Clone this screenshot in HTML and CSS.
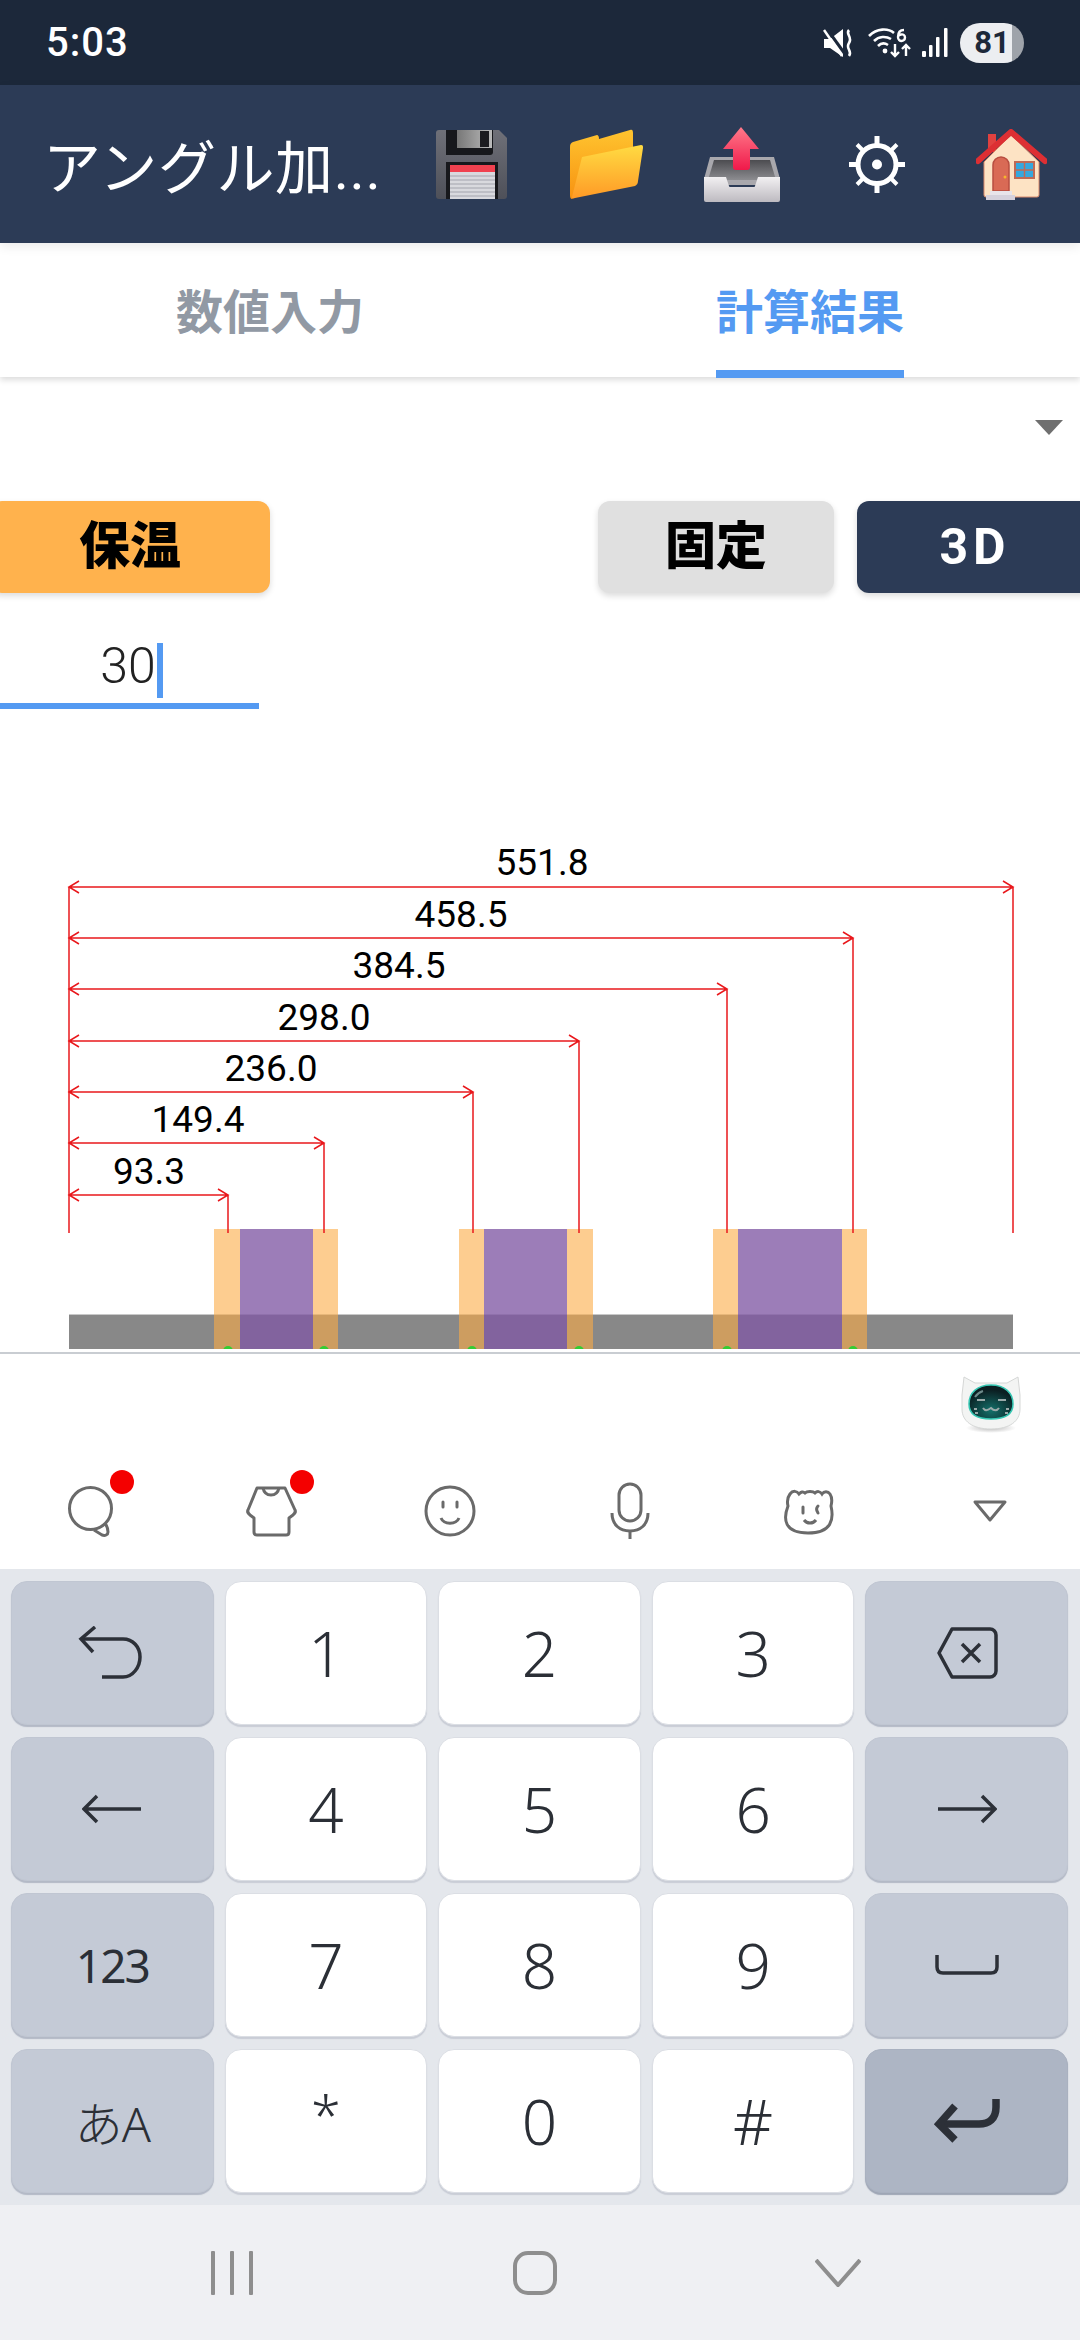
FILE: index.html
```html
<!DOCTYPE html>
<html lang="ja">
<head>
    <meta charset="UTF-8">
    <meta name="viewport" content="width=device-width, initial-scale=1.0">
    <title>アングル加工</title>
    <link rel="stylesheet" href="styles.css">
</head>
<body>
<div id="phone">
    <!-- ステータスバー -->
    <div id="status">
        <span class="time">5:03</span>
        <div class="status-icons">
            <svg width="30" height="28" viewBox="0 0 30 28"><path d="M1 10h6L20 0v28L7 19H1z" fill="#fff"/><path d="M4 0l18 25" stroke="#1c283a" stroke-width="3"/><path d="M1 1l18 26" stroke="#fff" stroke-width="2.500"/><path d="M26 1c-4 4 4 7 0 13s4 8 0 13" fill="none" stroke="#fff" stroke-width="2.600"/></svg>
            <svg width="44" height="31" viewBox="0 0 44 31"><g fill="none" stroke="#fff" stroke-width="2.600"><path d="M1 9c8-8 19-8 25-3"/><path d="M6 14c5-5 12-5 17-2"/><path d="M10 19c3-3 7-3 10-1"/></g><circle cx="17" cy="24" r="2.400" fill="#fff"/><g fill="none" stroke="#fff" stroke-width="2.400"><path d="M27 17v12M23 25l4 4 4-4"/><path d="M38 29V18M34 22l4-4 4 4"/><path d="M36 3c-4 0-6 3-6 7 0 3 2 4 3.500 4s3.500-1 3.500-3.500S35 7 33 7.500 30 9 30 10"/></g></svg>
            <svg width="26" height="29" viewBox="0 0 26 29" fill="#fff"><rect x="0" y="23" width="4" height="6" rx="1"/><rect x="7" y="17" width="3.500" height="12" rx="1"/><rect x="14" y="9" width="3.500" height="20" rx="1"/><rect x="22" y="0" width="3.500" height="29" rx="1"/></svg>
            <div class="battery"><span>81</span></div>
        </div>
    </div>

    <!-- ヘッダー -->
    <div id="header">
        <div class="title">アングル加...</div>
        <div class="tools">
            <div class="tool">
            <svg width="71" height="69" viewBox="0 0 71 69">
                <defs>
                    <linearGradient id="fl" x1="0" y1="0" x2="0" y2="1"><stop offset="0" stop-color="#6f7078"/><stop offset="1" stop-color="#4e5059"/></linearGradient>
                    <linearGradient id="sh" x1="0" y1="0" x2="1" y2="0"><stop offset="0" stop-color="#777"/><stop offset="1" stop-color="#bbb"/></linearGradient>
                </defs>
                <path d="M3 0h60l8 8v58a3 3 0 0 1-3 3H3a3 3 0 0 1-3-3V3a3 3 0 0 1 3-3z" fill="url(#fl)"/>
                <path d="M10 0h47v22a3 3 0 0 1-3 3H10z" fill="#17181c"/>
                <rect x="21" y="0" width="35" height="18" fill="url(#sh)"/>
                <rect x="44" y="1" width="9" height="16" fill="#1c1c20"/>
                <rect x="10" y="32" width="52" height="37" fill="#17181c"/>
                <rect x="14" y="35" width="45" height="7" fill="#f0414f"/>
                <rect x="14" y="42" width="45" height="27" fill="#d9d9de"/>
                <g stroke="#a3a4ad" stroke-width="1"><path d="M14 46h45M14 50h45M14 54h45M14 58h45M14 62h45M14 66h45"/></g>
            </svg>
            </div>
            <div class="tool">
            <svg width="73" height="70" viewBox="0 0 73 70">
                <defs>
                    <linearGradient id="fa" x1="0" y1="0" x2="0" y2="1"><stop offset="0" stop-color="#ffc42f"/><stop offset="1" stop-color="#f79211"/></linearGradient>
                    <linearGradient id="fb" x1="0" y1="0" x2="0" y2="1"><stop offset="0" stop-color="#ffdb42"/><stop offset="1" stop-color="#ff9a26"/></linearGradient>
                </defs>
                <path d="M0 18c0-3 1-4 3-5l24-7c1 0 2 1 2 4l31-9c2-1 3 0 3 3v36L5 68 2 70C1 70 0 69 0 66z" fill="url(#fa)"/>
                <path d="M12 28l59-12c2 0 2 1 2 3l-5 33c0 2-1 4-3 5L5 69c-2 1-3 0-3-1z" fill="url(#fb)"/>
            </svg>
            </div>
            <div class="tool">
            <svg width="76" height="75" viewBox="0 0 76 75">
                <defs>
                    <linearGradient id="ar" x1="0" y1="0" x2="0" y2="1"><stop offset="0" stop-color="#ff7a8a"/><stop offset="1" stop-color="#f0194a"/></linearGradient>
                    <linearGradient id="bx" x1="0" y1="0" x2="0" y2="1"><stop offset="0" stop-color="#f2f0f2"/><stop offset="1" stop-color="#bdbac0"/></linearGradient>
                    <linearGradient id="in" x1="0" y1="0" x2="0" y2="1"><stop offset="0" stop-color="#4c4c50"/><stop offset="1" stop-color="#8c8c90"/></linearGradient>
                </defs>
                <path d="M6 30h64l6 22v6H0v-6z" fill="#a9a8ad"/>
                <path d="M10 33h56l6 20H4z" fill="url(#in)"/>
                <path d="M0 50h22l3 9c0 1 1 1 2 1h22c1 0 2 0 2-1l3-9h22v23a2 2 0 0 1-2 2H2a2 2 0 0 1-2-2z" fill="url(#bx)"/>
                <path d="M37 0l18 22H46v18a3 3 0 0 1-3 3H32a3 3 0 0 1-3-3V22H19z" fill="url(#ar)"/>
            </svg>
            </div>
            <div class="tool">
            <svg width="56" height="57" viewBox="0 0 56 57">
                <g stroke="#fff" fill="none">
                    <circle cx="28" cy="28.500" r="19" stroke-width="5"/>
                    <path d="M28 0v9M28 48v9M0 28.500h9M47 28.500h9" stroke-width="5"/>
                    <path d="M8 8.500l6 6M42 42.500l6 6M48 8.500l-6 6M14 42.500l-6 6" stroke-width="4"/>
                </g>
                <circle cx="28" cy="28.500" r="5" fill="#fff"/>
            </svg>
            </div>
            <div class="tool">
            <svg width="71" height="71" viewBox="0 0 71 71">
                <rect x="12" y="5" width="8" height="18" fill="#e0413f"/>
                <path d="M8 33L35 6l28 27v33a2 2 0 0 1-2 2H10a2 2 0 0 1-2-2z" fill="#fde3c4" stroke="#d98a6c" stroke-width="1"/>
                <path d="M2 32L35 3l34 29" fill="none" stroke="#dd2f33" stroke-width="6" stroke-linecap="round" stroke-linejoin="round"/>
                <path d="M17 62V36a8 8 0 0 1 16 0v26z" fill="#d96a55" stroke="#b84d40" stroke-width="1.500"/>
                <circle cx="29" cy="48" r="1.500" fill="#f7b52c"/>
                <rect x="39" y="33" width="19" height="16" fill="#35a8de" stroke="#c06a55" stroke-width="2"/>
                <path d="M48.500 33v16M39 41h19" stroke="#c06a55" stroke-width="1.500"/>
                <rect x="14" y="62" width="22" height="4" fill="#e8e4ea"/>
                <rect x="10" y="66" width="29" height="5" fill="#d5d1dc"/>
            </svg>
            </div>
        </div>
    </div>

    <!-- タブ -->
    <div id="tabs">
        <div class="tab">数値入力</div>
        <div class="tab active"><span>計算結果</span></div>
    </div>

    <!-- メイン -->
    <div id="main">
        <div class="select-row"><span class="select-arrow"></span></div>
        <div class="btn-row">
            <div class="btn btn-orange">保温</div>
            <div class="btn btn-gray">固定</div>
            <div class="btn btn-navy">3D</div>
        </div>
        <div class="input-box"><span class="value">30</span><span class="caret"></span></div>

        <!-- 図 -->
        <svg class="diagram" width="1080" height="532" viewBox="0 820 1080 532">
            <rect x="69" y="1314" width="944" height="35" fill="#888"/>
            <rect x="69" y="1314" width="944" height="1" fill="#c8c8c8"/>
            <g fill="rgba(252,172,70,.6)">
                <rect x="214" y="1229" width="26" height="120"/><rect x="313" y="1229" width="25" height="120"/>
                <rect x="459" y="1229" width="25" height="120"/><rect x="567" y="1229" width="26" height="120"/>
                <rect x="713" y="1229" width="25" height="120"/><rect x="842" y="1229" width="25" height="120"/>
            </g>
            <g fill="rgba(128,88,164,.78)">
                <rect x="240" y="1229" width="73" height="120"/>
                <rect x="484" y="1229" width="83" height="120"/>
                <rect x="738" y="1229" width="104" height="120"/>
            </g>
            <g fill="#3c3">
                <circle cx="228" cy="1351" r="5"/><circle cx="324" cy="1351" r="5"/>
                <circle cx="472" cy="1351" r="5"/><circle cx="579" cy="1351" r="5"/>
                <circle cx="727" cy="1351" r="5"/><circle cx="853" cy="1351" r="5"/>
            </g>
            <rect x="0" y="1349" width="1080" height="3" fill="#fff"/>
            <g class="dim" fill="none" stroke="#e9181c" stroke-width="1.500">
                <path d="M69 887V1233"/>
                <path d="M69 887H1013M79 881L69 887L79 893M1003 881L1013 887L1003 893M1013 887V1233"/>
                <path d="M69 938H853M79 932L69 938L79 944M843 932L853 938L843 944M853 938V1233"/>
                <path d="M69 989H727M79 983L69 989L79 995M717 983L727 989L717 995M727 989V1233"/>
                <path d="M69 1041H579M79 1035L69 1041L79 1047M569 1035L579 1041L569 1047M579 1041V1233"/>
                <path d="M69 1092H473M79 1086L69 1092L79 1098M463 1086L473 1092L463 1098M473 1092V1233"/>
                <path d="M69 1143H324M79 1137L69 1143L79 1149M314 1137L324 1143L314 1149M324 1143V1233"/>
                <path d="M69 1195H228M79 1189L69 1195L79 1201M218 1189L228 1195L218 1201M228 1195V1233"/>
            </g>
            <g class="dim-label" text-anchor="middle">
                <text x="542" y="875">551.8</text>
                <text x="461" y="927">458.5</text>
                <text x="399" y="978">384.5</text>
                <text x="324" y="1030">298.0</text>
                <text x="271" y="1081">236.0</text>
                <text x="198" y="1132">149.4</text>
                <text x="149" y="1184">93.3</text>
            </g>
        </svg>
    </div>

    <!-- キーボードのツールバー -->
    <div id="kb-bar">
        <div class="robot-row">
            <svg width="62" height="60" viewBox="0 0 62 60">
                <defs>
                    <radialGradient id="face" cx=".5" cy=".75" r=".6"><stop offset="0" stop-color="#13706a"/><stop offset="1" stop-color="#0b1f22"/></radialGradient>
                    <radialGradient id="sd" cx=".5" cy=".5" r=".5"><stop offset="0" stop-color="#bbb"/><stop offset="1" stop-color="#fff"/></radialGradient>
                </defs>
                <ellipse cx="31" cy="55" rx="25" ry="5" fill="url(#sd)"/>
                <path d="M4 4l11 6h32l11-6 2 18v14c0 12-10 20-29 20S2 48 2 36V22z" fill="#f3f4f3" stroke="#d5d7d6"/>
                <path d="M31 12c14 0 22 8 22 19 0 10-8 15-22 15S9 41 9 31c0-11 8-19 22-19z" fill="url(#face)" stroke="#35c7b3" stroke-width="1.500"/>
                <path d="M15 24c2-3 5-5 8-6" stroke="#6d8b8b" stroke-width="2" fill="none"/>
                <g stroke="#9aa9a9" stroke-width="2" fill="none"><path d="M17 27h8M38 27h8"/><path d="M23 35c2 3 4 3 8 0 3 3 6 3 8 0"/><path d="M14 36h3M46 36h3M15 40h3M45 40h3"/></g>
            </svg>
        </div>
        <div class="bar-icons">
            <div class="bar-icon">
                <svg width="64" height="60" viewBox="0 0 64 60" fill="none" stroke="#6a6a6a" stroke-width="3"><circle cx="32.500" cy="29.500" r="21"/><path d="M47 44c2 3 3 6 3 9 0 3-3 4-6 3l-8-5"/></svg>
                <span class="red-dot"></span>
            </div>
            <div class="bar-icon">
                <svg width="64" height="60" viewBox="0 0 64 60" fill="none" stroke="#6a6a6a" stroke-width="3" stroke-linejoin="round"><path d="M19 9h28l10 22c1 2 0 3-2 5l-4 3v14c0 2-1 3-3 3H19c-2 0-3-1-3-3V39l-4-3c-2-2-3-3-2-5z"/><path d="M25 9c1 5 4 7 8 7s7-2 8-7"/></svg>
                <span class="red-dot"></span>
            </div>
            <div class="bar-icon">
                <svg width="64" height="60" viewBox="0 0 64 60" fill="none" stroke="#6a6a6a" stroke-width="3"><circle cx="32" cy="32" r="24"/><path d="M23 39c3 7 15 7 18 0"/><path d="M25 23v5M39 23v5" stroke-linecap="round"/></svg>
            </div>
            <div class="bar-icon">
                <svg width="64" height="60" viewBox="0 0 64 60" fill="none" stroke="#6a6a6a" stroke-width="3"><rect x="21" y="5" width="22" height="37" rx="11"/><path d="M14 34c0 12 8 18 18 18s18-6 18-18"/><path d="M32 52v8"/></svg>
            </div>
            <div class="bar-icon">
                <svg width="64" height="60" viewBox="0 0 64 60" fill="none" stroke="#6a6a6a" stroke-width="3"><path d="M12 15c3-4 7-3 9 0 2-2 4-3 6-1 2-2 8-2 10 0 2-2 5-2 7 1 2-3 6-3 8 0 2 3 2 8 1 12 3 13 1 27-23 27S5 40 10 27c-1-4-1-8 2-12z"/><path d="M25 28v6M40 27c-2 2-2 4 0 7" stroke-linecap="round"/><path d="M26 41c3 4 9 4 12 0"/></svg>
            </div>
            <div class="bar-icon">
                <svg width="64" height="60" viewBox="0 0 64 60" fill="none" stroke="#6a6a6a" stroke-width="3" stroke-linejoin="round"><path d="M17 23h30L32 41z"/></svg>
            </div>
        </div>
    </div>

    <!-- キーボード -->
    <div id="keyboard">
        <div class="key side">
            <svg width="68" height="54" viewBox="0 0 68 54" fill="none" stroke="#2c3038" stroke-width="3.500"><path d="M3 13h42c10 0 17 8 17 18s-7 20-17 20H24"/><path d="M17 1L3 13l12 13"/></svg>
        </div>
        <div class="key">1</div>
        <div class="key">2</div>
        <div class="key">3</div>
        <div class="key side">
            <svg width="62" height="52" viewBox="0 0 62 52" fill="none" stroke="#2c3038" stroke-width="3.500" stroke-linejoin="round"><path d="M16 2h38a6 6 0 0 1 6 6v36a6 6 0 0 1-6 6H16L3 26z"/><path d="M26 17l18 18M44 17L26 35"/></svg>
        </div>
        <div class="key side">
            <svg width="60" height="30" viewBox="0 0 60 30" fill="none" stroke="#2c3038" stroke-width="3.500"><path d="M2 15h57M15 2L2 15l13 13"/></svg>
        </div>
        <div class="key">4</div>
        <div class="key">5</div>
        <div class="key">6</div>
        <div class="key side">
            <svg width="60" height="30" viewBox="0 0 60 30" fill="none" stroke="#2c3038" stroke-width="3.500"><path d="M1 15h57M45 2l13 13-13 13"/></svg>
        </div>
        <div class="key side small">123</div>
        <div class="key">7</div>
        <div class="key">8</div>
        <div class="key">9</div>
        <div class="key side">
            <svg width="64" height="20" viewBox="0 0 64 20" fill="none" stroke="#2c3038" stroke-width="3.500"><path d="M2 0v12c0 4 2 6 6 6h48c4 0 6-2 6-6V0"/></svg>
        </div>
        <div class="key side small kana">あA</div>
        <div class="key star">*</div>
        <div class="key">0</div>
        <div class="key">#</div>
        <div class="key enter">
            <svg width="68" height="44" viewBox="0 0 68 44" fill="none" stroke="#2c3038" stroke-width="7.500" stroke-linejoin="miter"><path d="M63 0v8c0 12-7 17-17 17H8"/><path d="M22 7L6 25l16 16"/></svg>
        </div>
    </div>

    <!-- ナビゲーションバー -->
    <div id="nav">
        <svg class="nav-recent" width="42" height="44" viewBox="0 0 42 44" fill="#8e8e8e"><rect x="0" width="4" height="44" rx="1"/><rect x="19" width="4" height="44" rx="1"/><rect x="38" width="4" height="44" rx="1"/></svg>
        <span class="nav-home"></span>
        <svg class="nav-back" width="46" height="28" viewBox="0 0 46 28" fill="none" stroke="#8e8e8e" stroke-width="4"><path d="M1 1l22 25L45 1"/></svg>
    </div>
</div>
</body>
</html>
```
FILE: styles.css
```css
*{
    margin: 0;
    padding: 0;
    box-sizing: border-box;
}
html,body{
    width: 1080px;
    height: 2340px;
    overflow: hidden;
    background-color: #ffffff;
}
#phone{
    width: 1080px;
    height: 2340px;
    display: flex;
    flex-direction: column;
    font-family: Roboto, "Noto Sans CJK JP", sans-serif;
    overflow: hidden;
}
/* status bar */
#status{
    height: 85px;
    flex: none;
    background-color: #1c283a;
    display: flex;
    align-items: center;
    justify-content: space-between;
    padding: 0 56px 0 46px;
    color: #ffffff;
}
.time{
    font-size: 40px;
    font-weight: 500;
    letter-spacing: 1px;
}
.status-icons{
    display: flex;
    align-items: center;
}
.status-icons svg:nth-child(1){
    margin-right: 15px;
}
.status-icons svg:nth-child(2){
    margin-right: 10px;
}
.status-icons svg:nth-child(3){
    margin-right: 12px;
}
.battery{
    width: 64px;
    height: 40px;
    border-radius: 20px;
    background: linear-gradient(90deg, #eceef1 81%, #9ea3aa 81%);
    color: #1c283a;
    font-size: 31px;
    font-weight: 700;
    line-height: 40px;
    text-align: center;
}
/* header */
#header{
    height: 158px;
    flex: none;
    background-color: #2c3b56;
    display: flex;
    align-items: center;
    justify-content: space-between;
    padding: 0 1px 0 43px;
    position: relative;
    z-index: 2;
    box-shadow: 0 4px 10px rgba(0,0,0,.08);
}
.title{
    color: #ffffff;
    font-size: 58px;
    font-weight: 400;
    letter-spacing: .6px;
    white-space: nowrap;
}
.tools{
    display: grid;
    grid-template-columns: repeat(5, 135px);
    align-items: center;
    justify-items: center;
}
.tool{
    display: flex;
}
/* tabs */
#tabs{
    height: 134px;
    flex: none;
    display: grid;
    grid-template-columns: 1fr 1fr;
    background-color: #ffffff;
    box-shadow: 0 3px 6px rgba(0,0,0,.14);
    position: relative;
    z-index: 1;
}
.tab{
    display: flex;
    justify-content: center;
    font-size: 47px;
    font-weight: 700;
    color: #9199a4;
    line-height: 140px;
}
.tab.active span{
    color: #549af2;
    border-bottom: 8px solid #549af2;
    height: 135px;
}
/* main */
#main{
    flex: 1;
    min-height: 0;
    overflow: hidden;
    background-color: #ffffff;
}
.select-row{
    display: flex;
    justify-content: flex-end;
    padding: 43px 17px 0 0;
    height: 124px;
}
.select-arrow{
    width: 0;
    height: 0;
    border-left: 14px solid transparent;
    border-right: 14px solid transparent;
    border-top: 15px solid #6f6f6f;
}
.btn-row{
    display: flex;
    height: 92px;
    gap: 23px;
}
.btn{
    height: 92px;
    border-radius: 12px;
    font-size: 51px;
    font-weight: 900;
    line-height: 92px;
    text-align: center;
    box-shadow: 0 3px 6px rgba(0,0,0,.14);
    color: #000000;
}
.btn-orange{
    width: 280px;
    margin-left: -10px;
    background-color: #ffb24d;
}
.btn-gray{
    width: 236px;
    margin-left: auto;
    background-color: #e0e0e0;
}
.btn-navy{
    width: 236px;
    margin-right: -13px;
    flex: none;
    background-color: #2c3b56;
    color: #ffffff;
    font-size: 50px;
    font-weight: 700;
    letter-spacing: 5px;
}
.input-box{
    width: 259px;
    height: 116px;
    border-bottom: 6px solid #549af2;
    display: flex;
    justify-content: center;
    align-items: flex-end;
    padding: 0 0 5px 4px;
    color: #222222;
    font-size: 50px;
    font-weight: 300;
}
.value{
    line-height: 56px;
    padding-bottom: 4px;
}
.caret{
    width: 6px;
    height: 55px;
    margin-left: 1px;
    background-color: #549af2;
}
.diagram{
    display: block;
    margin-top: 111px;
}
.dim-label{
    font-family: Roboto, sans-serif;
    font-size: 37px;
    font-weight: 400;
    fill: #000000;
}
/* keyboard toolbar */
#kb-bar{
    height: 217px;
    flex: none;
    border-top: 2px solid #c9cdd2;
    background-color: #ffffff;
    display: flex;
    flex-direction: column;
}
.robot-row{
    display: flex;
    justify-content: flex-end;
    padding: 19px 58px 0 0;
    height: 125px;
}
.bar-icons{
    display: grid;
    grid-template-columns: repeat(6, 1fr);
}
.bar-icon{
    display: flex;
    justify-content: center;
    position: relative;
    height: 60px;
}
.red-dot{
    position: absolute;
    left: 110px;
    top: -9px;
    width: 24px;
    height: 24px;
    border-radius: 50%;
    background-color: #f40000;
}
/* keyboard */
#keyboard{
    height: 636px;
    flex: none;
    background-color: #e4e7ec;
    padding: 12px 12px 12px 11px;
    display: grid;
    grid-template-columns: repeat(5, 1fr);
    grid-template-rows: repeat(4, 144px);
    gap: 12px 11px;
}
.key{
    display: flex;
    align-items: center;
    justify-content: center;
    border-radius: 16px;
    background-color: #ffffff;
    border: 1px solid #dbdee4;
    box-shadow: 0 2px 1px #c9cdd6;
    font-family: "Noto Sans", sans-serif;
    font-weight: 300;
    font-size: 62px;
    color: #2b2f36;
}
.key.side{
    background-color: #c4cad6;
    border-color: #c0c6d2;
    box-shadow: 0 2px 1px #b3b9c6;
}
.key.small{
    font-size: 46px;
    font-weight: 400;
    letter-spacing: -2px;
    font-family: "Noto Sans", "Noto Sans CJK JP", sans-serif;
}
.key.kana{
    font-size: 48px;
    font-weight: 300;
    letter-spacing: -1px;
}
.key.star{
    font-size: 54px;
    padding-bottom: 14px;
}
.key.enter{
    background-color: #adb5c4;
    border-color: #a9b1c0;
    box-shadow: 0 2px 1px #9ea6b5;
}
/* nav bar */
#nav{
    height: 135px;
    flex: none;
    background-color: #eff0f3;
    display: grid;
    grid-template-columns: 1fr 1fr 1fr;
    align-items: center;
    justify-items: center;
    padding: 0 91px 0 80px;
}
.nav-home{
    width: 44px;
    height: 44px;
    border: 4px solid #8e8e8e;
    border-radius: 15px;
}
.nav-recent,.nav-home,.nav-back{
    display: block;
}
```
